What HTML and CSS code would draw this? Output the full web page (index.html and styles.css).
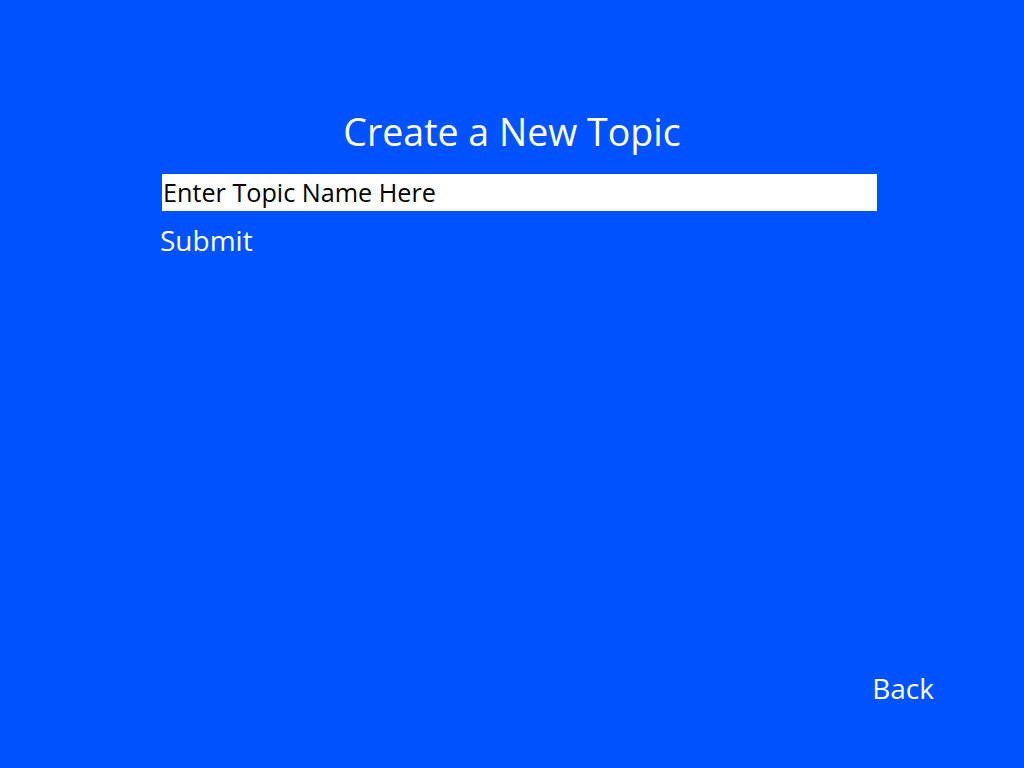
FILE: index.html
```html
<!DOCTYPE html>
<html>
<head>
<meta charset="utf-8">
<link rel="stylesheet" href="styles.css">
</head>
<body>
<div class="page">
  <h1 class="title">Create a New Topic</h1>
  <div class="form">
    <div class="input">Enter Topic Name Here</div>
    <div class="submit">Submit</div>
  </div>
  <div class="spacer"></div>
  <div class="footer"><span class="back">Back</span></div>
</div>
</body>
</html>
```
FILE: styles.css
```css
html, body {
  margin: 0;
  padding: 0;
  background: #0052ff;
}
body {
  font-family: "Open Sans", "Noto Sans", sans-serif;
  color: #ffffff;
}
.page {
  width: 1024px;
  height: 768px;
  display: flex;
  flex-direction: column;
  box-sizing: border-box;
  padding-top: 106px;
}
.title {
  margin: 0;
  text-align: center;
  font-weight: 400;
  font-size: 37.5px;
  line-height: 52px;
  letter-spacing: 0;
}
.form {
  margin-top: 16px;
  padding-left: 162px;
  display: flex;
  flex-direction: column;
}
.input {
  width: 715px;
  height: 37px;
  background: #fff;
  color: #000;
  font-size: 25.2px;
  line-height: 37px;
  box-sizing: border-box;
  padding-left: 1px;
}
.submit {
  margin-top: 9px;
  font-size: 28px;
  line-height: 40px;
  margin-left: -2px;
}
.spacer { flex: 1; }
.footer {
  display: flex;
  justify-content: flex-end;
  padding-right: 90px;
  padding-bottom: 60px;
}
.back {
  font-size: 28px;
  line-height: 40px;
}
```
